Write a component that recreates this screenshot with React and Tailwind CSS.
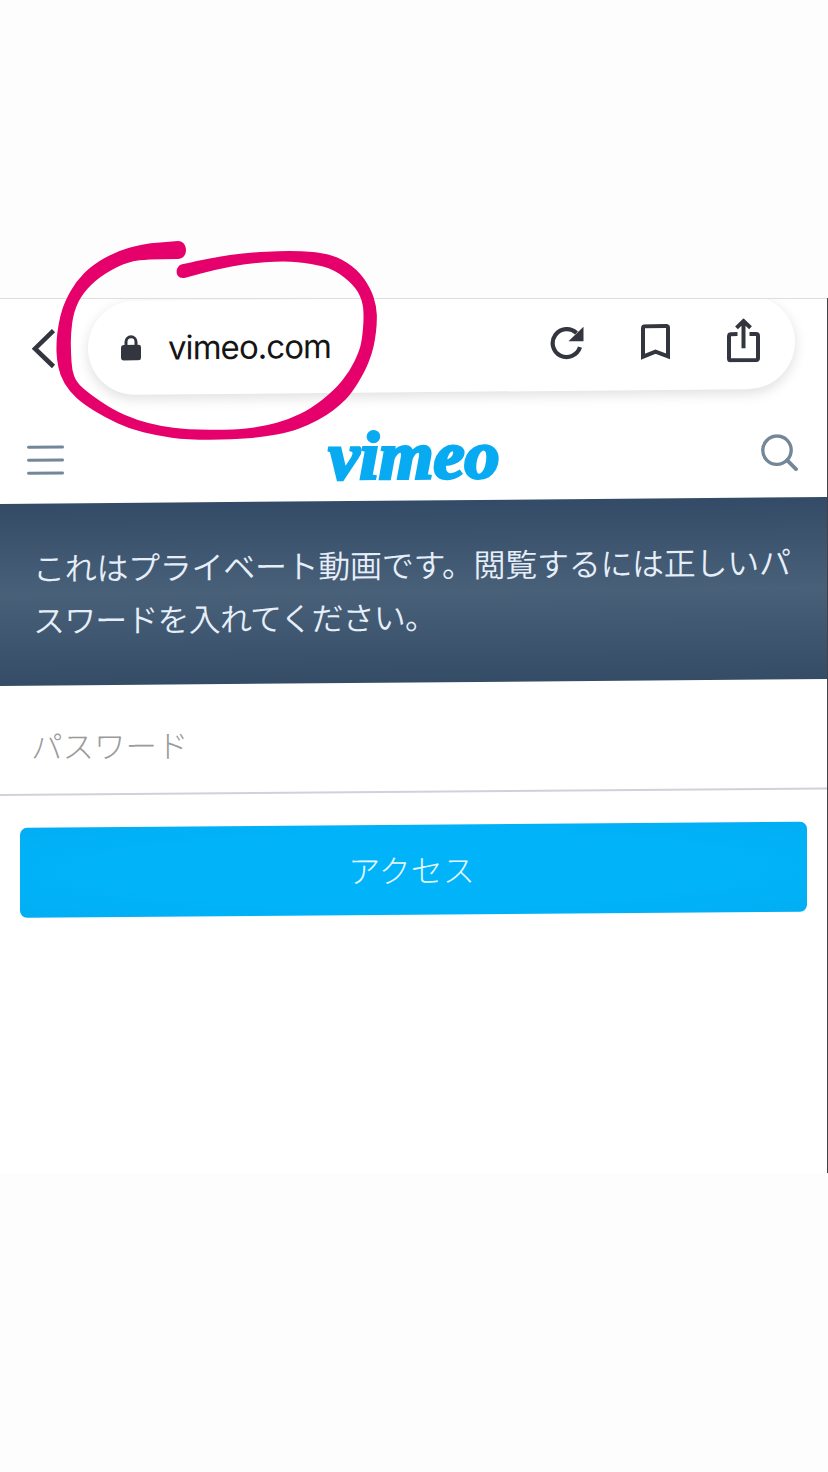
const ReloadIcon = () => (
  <svg className="h-[34px] w-[34px]" viewBox="0 0 34 34" fill="none">
    <path d="M26.5 7.2A14 14 0 1 0 30 21.5" stroke="#33363f" strokeWidth="4.2" />
    <path d="M33.5 1v14.5H18.5z" fill="#33363f" />
  </svg>
);

const BookmarkIcon = () => (
  <svg className="h-9 w-[29px]" viewBox="0 0 29 36" fill="none" stroke="#33363f" strokeWidth="4">
    <path d="M2 32.5V4Q2 2 4 2H25Q27 2 27 4V32.5L14.5 27.5Z" />
  </svg>
);

const ShareIcon = () => (
  <svg className="h-11 w-[33px]" viewBox="0 0 33 44" fill="none" stroke="#33363f" strokeWidth="4">
    <path d="M10.5 15.8H4Q2 15.8 2 18V40Q2 42 4 42H29Q31 42 31 40V18Q31 15.8 29 15.8H22.5" />
    <path d="M16.5 30V3M9.5 9.5L16.5 2.8 23.5 9.5" />
  </svg>
);

const LockIcon = () => (
  <svg className="h-[26px] w-5" viewBox="0 0 20 26" fill="none">
    <path d="M5 12V7a5 5 0 0 1 10 0v5" stroke="#33363f" strokeWidth="3" />
    <rect y="10" width="20" height="15.5" rx="2.5" fill="#33363f" />
  </svg>
);

function AddressBar() {
  return (
    <div className="h-[112px] overflow-hidden border-t border-[#dedee0]">
      <div className="flex origin-left -skew-y-[0.52deg] items-center pt-[3px] pl-8">
        <svg className="h-10 w-6 shrink-0" viewBox="0 0 24 40" fill="none">
          <path d="M21.5 2L3 20l18.5 18" stroke="#33363f" strokeWidth="4.6" />
        </svg>
        <div className="ml-8 flex h-[94px] w-[707px] items-center rounded-full bg-white pr-[35px] pl-[33px] shadow-[0_4px_13px_rgba(0,0,0,0.13)]">
          <LockIcon />
          <span className="ml-[27px] font-['Inter'] text-[33px] leading-none tracking-[-0.95px] text-[#151515]">
            vimeo.com
          </span>
          <div className="ml-auto flex items-center">
            <span className="flex pb-[3px]"><ReloadIcon /></span>
            <span className="ml-[57px] flex pb-[3px]"><BookmarkIcon /></span>
            <span className="mb-1 ml-[57px] flex"><ShareIcon /></span>
          </div>
        </div>
      </div>
    </div>
  );
}

function SiteHeader() {
  return (
    <header className="flex h-[94px] origin-left -skew-y-[0.5deg] items-center justify-between pr-[29px] pl-[27px]">
      <div className="flex w-[37px] flex-col gap-[9.5px] pt-[7px]">
        <span className="h-[3.6px] rounded-full bg-[#73869a]" />
        <span className="h-[3.6px] rounded-full bg-[#73869a]" />
        <span className="h-[3.6px] rounded-full bg-[#73869a]" />
      </div>
      <span className="ml-[3px] origin-center scale-x-[1.03] pt-[3px] font-['Liberation_Serif'] text-[68px] leading-[74px] font-bold text-[#08aaf2] italic [-webkit-text-stroke:3px_#08aaf2]">
        vimeo
      </span>
      <svg className="mt-[5px] h-[37px] w-[37px]" viewBox="0 0 37 37" fill="none" stroke="#738799" strokeWidth="3.4">
        <circle cx="16" cy="16" r="14.2" />
        <path d="M26 26l9 9" strokeLinecap="round" strokeWidth="3.8" />
      </svg>
    </header>
  );
}

// edges of the marker line, both running clockwise from the thin end to the thick end
const outerEdge = [
  [546, 103], [640, 82], [740, 68], [860, 62], [950, 66], [1012, 80], [1072, 118], [1112, 175], [1130, 230],
  [1131, 280], [1125, 330], [1116, 370], [1096, 422], [1055, 490], [1020, 525], [980, 556], [925, 585],
  [870, 606], [790, 621], [700, 629], [560, 629], [470, 617], [390, 597], [315, 562], [250, 522],
  [208, 484], [180, 437], [170, 385], [169, 345], [172, 305], [180, 260], [195, 213], [228, 154],
  [278, 104], [350, 64], [425, 43], [480, 37], [534, 33],
];
const innerEdge = [
  [556, 143], [650, 118], [740, 101], [850, 93], [935, 100], [1003, 119], [1061, 164], [1087, 210],
  [1092, 260], [1086, 330], [1077, 365], [1050, 423], [1002, 482], [932, 536], [870, 567], [790, 590],
  [700, 600], [560, 599], [480, 588], [410, 570], [340, 540], [265, 489], [229, 456], [216, 420],
  [213, 370], [212, 315], [221, 245], [248, 190], [300, 139], [370, 101], [430, 87], [534, 87],
];

// rounds the corners by using each point as the control between two midpoints
const smooth = (pts) =>
  pts
    .slice(1, -1)
    .map(([x, y], i) => {
      const [nx, ny] = pts[i + 2];
      return `Q${x} ${y} ${(x + nx) / 2} ${(y + ny) / 2}`;
    })
    .join("") + `L${pts[pts.length - 1].join(" ")}`;

const markerPath = `M546 103${smooth(outerEdge)}C566 33 566 87 534 87${smooth([...innerEdge].reverse())}C523 151 523 109 546 103Z`;

function MarkerCircle() {
  return (
    <svg className="pointer-events-none absolute top-[230px] left-0 h-[220px] w-[400px]" viewBox="0 0 1200 660">
      <path fill="#e6006c" d={markerPath} />
    </svg>
  );
}

export default function App() {
  return (
    <div className="relative h-[1472px] w-[828px] overflow-hidden bg-[#fdfdfd] pt-[298px] font-['Noto_Sans_CJK_JP',sans-serif]">
      <main className="h-[875px] overflow-hidden border-r border-[#424246] bg-white">
        <AddressBar />
        <SiteHeader />

        <section className="h-[182px] origin-left -skew-y-[0.48deg] bg-linear-to-b from-[#334b66] via-[#496079] to-[#344c66] pt-[37px] pl-[33px]">
          <p className="text-[32px] leading-[52px] font-[350] tracking-[-0.3px] whitespace-nowrap text-[#e6eff9]">
            これはプライベート動画です。閲覧するには正しいパ
            <br />
            <span className="tracking-[-0.85px]">スワードを入れてください。</span>
          </p>
        </section>

        <form className="origin-left -skew-y-[0.45deg]">
          <input
            type="text"
            placeholder="パスワード"
            className="block h-[110px] w-full border-b-2 border-[#cfd2da] pt-[10px] pl-[31px] text-[31.5px] font-light outline-none placeholder:text-[#9b9b9b]"
          />
          <div className="pt-8 pr-5 pl-5">
            <button
              type="button"
              className="block h-[90px] w-full rounded-[7px] bg-radial-[ellipse_at_center] from-[#01b4fa] from-50% to-[#02aef3] pr-1 pb-[2px] text-[32px] font-light text-[#e8faff]"
            >
              アクセス
            </button>
          </div>
        </form>
      </main>

      <MarkerCircle />
    </div>
  );
}
